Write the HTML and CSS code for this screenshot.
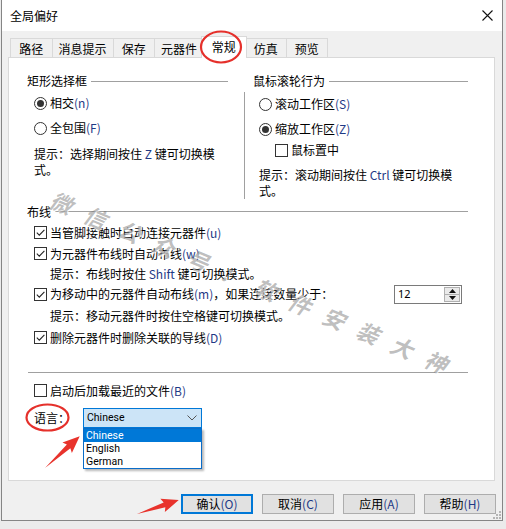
FILE: index.html
```html
<!DOCTYPE html>
<html lang="zh-CN">
<head>
<meta charset="utf-8">
<title>全局偏好</title>
<link rel="stylesheet" href="styles.css">
</head>
<body>
<div class="window">
  <div class="titlebar">
    <span class="title">全局偏好</span>
    <svg class="close" width="11" height="11" viewBox="0 0 11 11"><path d="M0.5 0.5 L10.5 10.5 M10.5 0.5 L0.5 10.5" stroke="#111" stroke-width="1.1" fill="none"/></svg>
  </div>
  <div class="body">
    <div class="tabs">
      <div class="tab">路径</div>
      <div class="tab">消息提示</div>
      <div class="tab">保存</div>
      <div class="tab">元器件</div>
      <div class="tab active">常规</div>
      <div class="tab">仿真</div>
      <div class="tab last">预览</div>
    </div>
    <div class="panel">
      <div class="top-groups">
        <section class="group g-left">
          <div class="group-title"><span>矩形选择框</span><i class="gline"></i></div>
          <div class="group-body">
            <div class="opt"><span class="radio on"></span>相交<span class="lt">(n)</span></div>
            <div class="opt r2"><span class="radio"></span>全包围<span class="lt">(F)</span></div>
            <p class="hint hint-l"><span>提示：选择期间按住 <span class="lt">Z</span> 键可切换模</span><br><span>式。</span></p>
          </div>
        </section>
        <section class="group g-right">
          <div class="group-title"><span>鼠标滚轮行为</span><i class="gline"></i></div>
          <div class="group-body">
            <div class="opt"><span class="radio"></span>滚动工作区<span class="lt">(S)</span></div>
            <div class="opt r2"><span class="radio on"></span>缩放工作区<span class="lt">(Z)</span></div>
            <div class="opt r3"><span class="check"></span>鼠标置中</div>
            <p class="hint hint-r"><span>提示：滚动期间按住 <span class="lt">Ctrl</span> 键可切换模</span><br><span>式。</span></p>
          </div>
        </section>
      </div>

      <section class="group wiring">
        <div class="group-title"><span>布线</span><i class="gline"></i></div>
        <div class="group-body">
          <div class="opt w1"><span class="check on"><svg width="11" height="11" viewBox="0 0 11 11"><path d="M1.8 5.6 L4.3 8.1 L9.4 2.8" stroke="#222" stroke-width="1.1" fill="none"/></svg></span>当管脚接触时自动连接元器件<span class="lt">(u)</span></div>
          <div class="opt w2"><span class="check on"><svg width="11" height="11" viewBox="0 0 11 11"><path d="M1.8 5.6 L4.3 8.1 L9.4 2.8" stroke="#222" stroke-width="1.1" fill="none"/></svg></span>为元器件布线时自动布线<span class="lt">(w)</span></div>
          <p class="hint sub h1">提示：布线时按住 <span class="lt">Shift</span> 键可切换模式。</p>
          <div class="opt w3"><span class="check on"><svg width="11" height="11" viewBox="0 0 11 11"><path d="M1.8 5.6 L4.3 8.1 L9.4 2.8" stroke="#222" stroke-width="1.1" fill="none"/></svg></span>为移动中的元器件自动布线<span class="lt">(m)</span>，如果连接数量少于：
            <div class="spin">
              <span class="spin-val">12</span>
              <div class="spin-btns">
                <span class="sb"><svg width="7" height="4" viewBox="0 0 7 4"><path d="M0 4 L3.5 0 L7 4 Z" fill="#111"/></svg></span>
                <span class="sb"><svg width="7" height="4" viewBox="0 0 7 4"><path d="M0 0 L7 0 L3.5 4 Z" fill="#111"/></svg></span>
              </div>
            </div>
          </div>
          <p class="hint sub h2">提示：移动元器件时按住空格键可切换模式。</p>
          <div class="opt w4"><span class="check on"><svg width="11" height="11" viewBox="0 0 11 11"><path d="M1.8 5.6 L4.3 8.1 L9.4 2.8" stroke="#222" stroke-width="1.1" fill="none"/></svg></span>删除元器件时删除关联的导线<span class="lt">(D)</span></div>
        </div>
      </section>

      <div class="sep"></div>

      <div class="opt startup"><span class="check"></span>启动后加载最近的文件<span class="lt">(B)</span></div>

      <div class="lang-row">
        <span class="lang-label">语言：</span>
        <div class="combo">
          <span>Chinese</span>
          <svg class="chev" width="10" height="6" viewBox="0 0 10 6"><path d="M0.5 0.5 L5 5 L9.5 0.5" stroke="#555" stroke-width="1" fill="none"/></svg>
          <ul class="dropdown">
            <li class="sel">Chinese</li>
            <li>English</li>
            <li>German</li>
          </ul>
        </div>
      </div>
    </div>

    <div class="buttons">
      <div class="btn default">确认<span class="lt">(O)</span></div>
      <div class="btn">取消<span class="lt">(C)</span></div>
      <div class="btn">应用<span class="lt">(A)</span></div>
      <div class="btn">帮助<span class="lt">(H)</span></div>
    </div>
  </div>
  <svg class="grip" width="9" height="9" viewBox="0 0 9 9">
    <rect x="7" y="1" width="2" height="2" fill="#b5b5b5"/>
    <rect x="4" y="4" width="2" height="2" fill="#b5b5b5"/>
    <rect x="7" y="4" width="2" height="2" fill="#b5b5b5"/>
    <rect x="1" y="7" width="2" height="2" fill="#b5b5b5"/>
    <rect x="4" y="7" width="2" height="2" fill="#b5b5b5"/>
    <rect x="7" y="7" width="2" height="2" fill="#b5b5b5"/>
  </svg>
</div>

<div class="watermark">微信公众号：软件安装大神</div>

<svg class="marks" width="506" height="529" viewBox="0 0 506 529">
  <ellipse cx="221" cy="47" rx="20" ry="15.5" fill="none" stroke="#e5302b" stroke-width="2.2"/>
  <ellipse cx="47.5" cy="417.5" rx="21" ry="13" fill="none" stroke="#e5302b" stroke-width="2.2"/>
  <polygon transform="translate(45 468) rotate(-42.4)" points="0,0 32,-2.6 30,-7 47,0 30,7 32,2.6" fill="#e8332c"/>
  <polygon transform="translate(137 514) rotate(-18.4)" points="0,0 29,-2.6 27,-7 44,0 27,7 29,2.6" fill="#e8332c"/>
</svg>
</body>
</html>
```

FILE: styles.css
```css
* {
  box-sizing: border-box;
  margin: 0;
  padding: 0;
}

html, body {
  width: 506px;
  height: 529px;
  overflow: hidden;
}

body {
  background: #ebebeb;
  font-family: "Noto Sans CJK SC", "Noto Sans", sans-serif;
  font-size: 12px;
  color: #000;
  position: relative;
}

.window {
  margin-left: 1px;
  width: 502px;
  height: 521px;
  border: 1px solid #858585;
  border-top: none;
  background: #f0f0f0;
  position: relative;
  display: flex;
  flex-direction: column;
}

.titlebar {
  height: 31px;
  flex: none;
  background: #fff;
  display: flex;
  align-items: center;
  justify-content: space-between;
  padding: 0 9px 0 8px;
  line-height: 16px;
}

.title {
  font-size: 12px;
}

.body {
  flex: 1;
  padding: 5px 7px 6px 6px;
  display: flex;
  flex-direction: column;
}

/* tabs */
.tabs {
  display: flex;
  align-items: flex-end;
  padding-left: 2px;
  height: 21px;
  flex: none;
}

.tab {
  height: 19px;
  min-width: 41.5px;
  padding: 1px 6px 0;
  border: 1px solid #d9d9d9;
  border-bottom: none;
  border-right: none;
  background: #f0f0f0;
  display: flex;
  align-items: center;
  justify-content: center;
  line-height: 16px;
  white-space: nowrap;
}

.tab.last {
  border-right: 1px solid #d9d9d9;
}

.tab.active {
  position: relative;
  z-index: 2;
  height: 22px;
  min-width: 45.5px;
  margin: 0 -2px -1px;
  padding-top: 0;
  padding-bottom: 1px;
  background: #fff;
  border-right: 1px solid #d9d9d9;
}

/* panel */
.panel {
  height: 424px;
  flex: none;
  background: #fff;
  border: 1px solid #d9d9d9;
  padding: 15px 26px 0 18px;
  position: relative;
}

.top-groups {
  display: grid;
  grid-template-columns: 201px 224px;
  column-gap: 16px;
  align-items: start;
}

.group-title {
  display: flex;
  align-items: center;
  height: 16px;
  line-height: 16px;
  white-space: nowrap;
}

.gline {
  flex: 1;
  height: 1px;
  background: #a0a0a0;
  margin-left: 4px;
}

.g-left .group-body {
  padding: 6px 0 0 7px;
}

.g-right .group-title {
  padding-left: 9px;
}

.g-right .group-body {
  border-left: 1px solid #a0a0a0;
  margin-top: 3px;
  padding: 4px 0 0 14px;
}

.opt {
  display: flex;
  align-items: center;
  height: 16px;
  line-height: 16px;
  white-space: nowrap;
}

.r2 { margin-top: 9px; }
.r3 { margin-top: 5px; margin-left: 16px; }

.radio {
  width: 13px;
  height: 13px;
  border: 1px solid #333;
  border-radius: 50%;
  background: #fff;
  margin-right: 3px;
  flex: none;
  display: flex;
  align-items: center;
  justify-content: center;
}

.radio.on::after {
  content: "";
  width: 7px;
  height: 7px;
  border-radius: 50%;
  background: #333;
}

.check {
  width: 13px;
  height: 13px;
  border: 1px solid #333;
  background: #fff;
  margin-right: 3px;
  flex: none;
  display: flex;
  align-items: center;
  justify-content: center;
}

.check svg {
  display: block;
}

.hint {
  line-height: 16px;
}

.hint-l {
  margin-top: 9.5px;
  white-space: nowrap;
}

.hint-r {
  margin-top: 9px;
  white-space: nowrap;
}

.lt {
  color: #1f3a86;
}

/* wiring */
.wiring {
  margin-top: 4.5px;
}

.wiring .group-body {
  padding-left: 7px;
}

.w1 { margin-top: 5px; }
.w2 { margin-top: 5px; }
.sub { padding-left: 16px; white-space: nowrap; line-height: 15px; }
.h1 { margin-top: 4px; }
.w3 { margin-top: 4px; height: 19px; }
.h2 { margin-top: 4.5px; }
.w4 { margin-top: 6.5px; }

.spin {
  margin-left: auto;
  margin-right: 6px;
  width: 68px;
  height: 19px;
  border: 1px solid #7a7a7a;
  background: #fff;
  display: flex;
  align-items: center;
  font-family: "Noto Sans", sans-serif;
  font-size: 11px;
}

.spin-val {
  padding-left: 3px;
  flex: 1;
}

.spin-btns {
  width: 16px;
  height: 15px;
  margin-right: 1px;
  display: flex;
  flex-direction: column;
  border: 1px solid #b0b0b0;
  background: #eaeaea;
}

.sb {
  flex: 1;
  display: flex;
  align-items: center;
  justify-content: center;
}

.sb + .sb {
  border-top: 1px solid #b0b0b0;
}

.sb svg {
  display: block;
}

.sep {
  margin: 26px 0 0 1px;
  height: 1px;
  background: #a0a0a0;
}

.startup {
  margin-top: 10px;
  margin-left: 7px;
}

.lang-row {
  margin-top: 9px;
  margin-left: 7px;
  display: flex;
  align-items: center;
  height: 20px;
}

.lang-label {
  width: 49px;
  line-height: 16px;
}

.combo {
  position: relative;
  width: 119px;
  height: 20px;
  border: 1px solid #0078d7;
  background: #cce4f7;
  display: flex;
  align-items: center;
  padding-left: 3px;
  font-family: Roboto, "Noto Sans", sans-serif;
  font-size: 10.5px;
}

.chev {
  margin-left: auto;
  margin-right: 4px;
  display: block;
}

.dropdown {
  position: absolute;
  left: -1px;
  top: 19px;
  width: 119px;
  height: 41px;
  border: 1px solid #0a6cc8;
  background: #fff;
  list-style: none;
  box-shadow: 2px 2px 2px rgba(0, 0, 0, 0.28);
  z-index: 3;
}

.dropdown li {
  height: 13px;
  line-height: 13px;
  padding-left: 2px;
}

.dropdown li.sel {
  background: #0078d7;
  color: #fff;
}

/* buttons */
.buttons {
  display: flex;
  justify-content: flex-end;
  gap: 9px;
  margin-top: 13px;
  margin-right: -1px;
}

.btn {
  width: 72px;
  height: 20px;
  border: 1px solid #adadad;
  background: #e1e1e1;
  display: flex;
  align-items: center;
  justify-content: center;
  line-height: 16px;
}

.btn.default {
  border: 2px solid #0078d7;
}

.grip {
  position: absolute;
  right: 1px;
  bottom: 1px;
}

/* overlays */
.watermark {
  position: absolute;
  left: 256px;
  top: 284px;
  transform: translate(-50%, -50%) rotate(23deg);
  font-size: 22px;
  font-weight: 700;
  letter-spacing: 15px;
  white-space: nowrap;
  color: rgba(110, 110, 110, 0.45);
  text-shadow: 1px 1px 0 rgba(255, 255, 255, 0.75);
  font-style: italic;
  pointer-events: none;
  z-index: 5;
}

.marks {
  position: absolute;
  left: 0;
  top: 0;
  pointer-events: none;
  z-index: 10;
}
```
